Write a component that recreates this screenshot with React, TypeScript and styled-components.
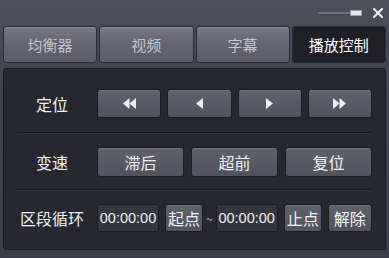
import { createGlobalStyle } from 'styled-components'
import styled from 'styled-components'

const GlobalStyle = createGlobalStyle`
  html, body {
    margin: 0;
    padding: 0;
    width: 389px;
    height: 258px;
    overflow: hidden;
    background: #3c3e49;
  }
`

const FONT = `"Noto Sans CJK SC", "Liberation Sans", sans-serif`

const Window = styled.div`
  width: 389px;
  height: 258px;
  display: flex;
  flex-direction: column;
  background: linear-gradient(#4d4f5c 0px, #434551 60px, #3a3c47 258px);
  font-family: ${FONT};
  box-sizing: border-box;
`

const TitleBar = styled.div`
  height: 26px;
  display: flex;
  align-items: center;
  justify-content: flex-end;
  padding-right: 6px;
  gap: 10px;
`

const TabRow = styled.div`
  display: flex;
  gap: 2px;
  height: 37px;
  margin: 0 3px 0 3px;
`

const Tab = styled.div<{ $active?: boolean }>`
  flex: 1;
  display: flex;
  align-items: center;
  justify-content: center;
  box-sizing: border-box;
  border: 1px solid #2a2b33;
  border-radius: 3px;
  font-size: 15px;
  color: ${(p) => (p.$active ? '#ffffff' : '#c3c5d0')};
  background: ${(p) =>
    p.$active
      ? '#1f2027'
      : 'linear-gradient(#767887, #626472 50%, #5a5c6a)'};
  box-shadow: ${(p) =>
    p.$active ? 'none' : 'inset 0 1px 0 rgba(255,255,255,0.12)'};
`

const Panel = styled.div`
  margin: 5px 3px 0 3px;
  height: 182px;
  box-sizing: border-box;
  background: #262730;
  border: 1px solid #1b1c22;
  border-radius: 3px;
  padding: 20px 13px 0 13px;
  display: flex;
  flex-direction: column;
`

const Row = styled.div<{ $h: number }>`
  display: flex;
  align-items: center;
  height: ${(p) => p.$h}px;
`

const Label = styled.div`
  width: 80px;
  padding-right: 10px;
  box-sizing: border-box;
  flex: none;
  text-align: center;
  color: #eeeff2;
  font-size: 16px;
  white-space: nowrap;
`

const Controls = styled.div<{ $gap: number }>`
  flex: 1;
  display: flex;
  align-items: center;
  gap: ${(p) => p.$gap}px;
  height: 100%;
`

const Btn = styled.div<{ $w?: number }>`
  ${(p) => (p.$w ? `width: ${p.$w}px; flex: none;` : 'flex: 1;')}
  height: 100%;
  box-sizing: border-box;
  display: flex;
  align-items: center;
  justify-content: center;
  border: 1px solid #1d1e24;
  border-radius: 3px;
  background: linear-gradient(#5f616d, #50525d);
  box-shadow: inset 0 1px 0 rgba(255, 255, 255, 0.1);
  color: #f0f1f4;
  font-size: 16px;
`

const TimeBox = styled.div`
  width: 62px;
  flex: none;
  height: 100%;
  box-sizing: border-box;
  display: flex;
  align-items: center;
  justify-content: center;
  background: #34363e;
  border: 1px solid #1c1d22;
  border-radius: 2px;
  color: #eceef0;
  font-family: "Liberation Sans", sans-serif;
  font-size: 14.5px;
`

const Tilde = styled.span`
  color: #b9bbc4;
  font-size: 12px;
  margin: 0 -3px;
`

const Separator = styled.div<{ $mt: number; $mb: number }>`
  height: 1px;
  background: #1a1b20;
  border-bottom: 1px solid #30323a;
  margin: ${(p) => p.$mt}px 0 ${(p) => p.$mb}px 0;
`

const Arrow = ({ kind }: { kind: 'rew' | 'prev' | 'next' | 'ff' }) => {
  const fill = '#eceef2'
  if (kind === 'prev')
    return (
      <svg width="7" height="11" viewBox="0 0 7 11">
        <polygon points="7,0 7,11 0,5.5" fill={fill} />
      </svg>
    )
  if (kind === 'next')
    return (
      <svg width="7" height="11" viewBox="0 0 7 11">
        <polygon points="0,0 0,11 7,5.5" fill={fill} />
      </svg>
    )
  if (kind === 'rew')
    return (
      <svg width="13" height="11" viewBox="0 0 13 11">
        <polygon points="6.5,0 6.5,11 0,5.5" fill={fill} />
        <polygon points="13,0 13,11 6.5,5.5" fill={fill} />
      </svg>
    )
  return (
    <svg width="13" height="11" viewBox="0 0 13 11">
      <polygon points="0,0 0,11 6.5,5.5" fill={fill} />
      <polygon points="6.5,0 6.5,11 13,5.5" fill={fill} />
    </svg>
  )
}

const Minimize = () => (
  <svg width="45" height="8" viewBox="0 0 45 8">
    <line x1="0" y1="4" x2="33" y2="4" stroke="#8e909c" strokeWidth="1" />
    <rect x="32.5" y="1.5" width="11" height="5" fill="#e8e9ee" stroke="#9a9ca8" strokeWidth="1" />
  </svg>
)

const Close = () => (
  <svg width="10" height="10" viewBox="0 0 10 10">
    <path d="M1 1 L9 9 M9 1 L1 9" stroke="#e8e9ee" strokeWidth="2.2" strokeLinecap="square" />
  </svg>
)

const tabs = ['均衡器', '视频', '字幕', '播放控制']

export default function App() {
  return (
    <>
      <GlobalStyle />
      <Window>
        <TitleBar>
          <Minimize />
          <Close />
        </TitleBar>
        <TabRow>
          {tabs.map((t, i) => (
            <Tab key={t} $active={i === 3}>
              {t}
            </Tab>
          ))}
        </TabRow>
        <Panel>
          <Row $h={29}>
            <Label>定位</Label>
            <Controls $gap={6}>
              <Btn><Arrow kind="rew" /></Btn>
              <Btn><Arrow kind="prev" /></Btn>
              <Btn><Arrow kind="next" /></Btn>
              <Btn><Arrow kind="ff" /></Btn>
            </Controls>
          </Row>
          <Separator $mt={14} $mb={13} />
          <Row $h={30}>
            <Label>变速</Label>
            <Controls $gap={7}>
              <Btn>滞后</Btn>
              <Btn>超前</Btn>
              <Btn>复位</Btn>
            </Controls>
          </Row>
          <Separator $mt={12} $mb={13} />
          <Row $h={28}>
            <Label>区段循环</Label>
            <Controls $gap={6}>
              <TimeBox>00:00:00</TimeBox>
              <Btn $w={38}>起点</Btn>
              <Tilde>~</Tilde>
              <TimeBox>00:00:00</TimeBox>
              <Btn $w={38}>止点</Btn>
              <Btn $w={44}>解除</Btn>
            </Controls>
          </Row>
        </Panel>
      </Window>
    </>
  )
}
